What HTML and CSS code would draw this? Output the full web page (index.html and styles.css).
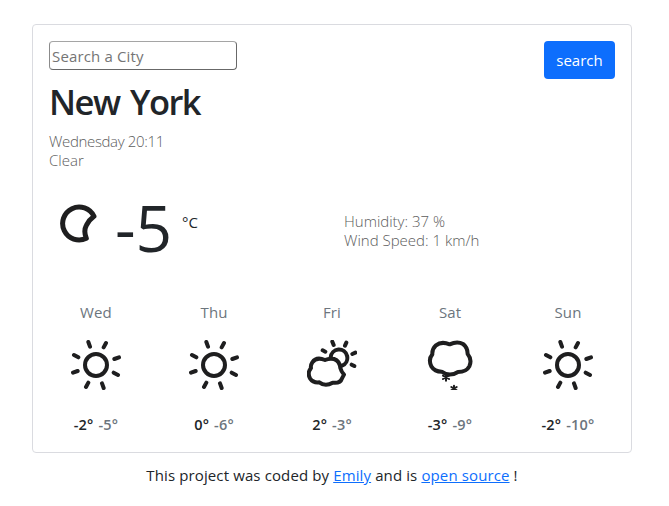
FILE: index.html
```html
<!DOCTYPE html>
<html lang="en">
<head>
<meta charset="utf-8">
<title>Weather</title>
<link rel="stylesheet" href="styles.css">
</head>
<body>
<svg width="0" height="0" class="defs">
  <symbol id="sun" viewBox="-75 -75 150 150">
    <circle r="33"/>
    <g id="rays"><path d="M-18-55L-23-69M23-53L30-66"/></g>
    <use href="#rays" transform="rotate(90)"/>
    <use href="#rays" transform="rotate(180)"/>
    <use href="#rays" transform="rotate(270)"/>
  </symbol>
</svg>
<main class="card">
  <form class="search">
    <input type="text" placeholder="Search a City">
    <button type="button">search</button>
  </form>
  <h1><span>New York</span></h1>
  <ul class="info">
    <li class="day">Wednesday 20:11</li>
    <li class="sky">Clear</li>
  </ul>
  <section class="current">
    <div class="now">
      <svg class="moon" viewBox="57 43 111 117"><path d="M159 80A49.5 49.5 0 1 0 136 146Q127 124 136 107Q144 91 159 80Z"/></svg>
      <span class="temp">-5</span>
      <span class="unit">°C</span>
    </div>
    <ul class="info details">
      <li class="humidity">Humidity: 37 %</li>
      <li class="wind">Wind Speed: 1 km/h</li>
    </ul>
  </section>
  <section class="forecast">
    <div><p class="name">Wed</p><svg><use href="#sun"/></svg><p class="temps"><b>-2°</b> <span>-5°</span></p></div>
    <div><p class="name">Thu</p><svg><use href="#sun"/></svg><p class="temps"><b>0°</b> <span>-6°</span></p></div>
    <div><p class="name">Fri</p>
      <svg viewBox="36 135 150 150">
        <path d="M107 187A25 25 0 1 1 141 212M112 140L116 150M154 143L150 152M83 166L91 170M172 177L181 173M170 209L178 213"/>
        <path d="M90 195Q64 184 52 202Q46 211 48 219Q36 234 45 250Q54 264 73 262Q91 276 113 263Q136 266 141 250L147 239Q139 230 136 219Q134 198 117 192Q103 189 90 195Z"/>
      </svg>
      <p class="temps"><b>2°</b> <span>-3°</span></p></div>
    <div><p class="name">Sat</p>
      <svg viewBox="390 135 150 150">
        <path d="M464 148Q439 138 423 151Q411 162 412 178Q399 193 409 214Q419 230 440 230Q464 247 489 231Q514 231 523 214Q532 194 518 177Q518 157 504 147Q487 137 464 148Z"/>
        <path class="flake" d="M453 237V257M444 242L462 252M444 252L462 242M477 272V290M469 276L485 286M469 286L485 276"/>
      </svg>
      <p class="temps"><b>-3°</b> <span>-9°</span></p></div>
    <div><p class="name">Sun</p><svg><use href="#sun"/></svg><p class="temps"><b>-2°</b> <span>-10°</span></p></div>
  </section>
</main>
<footer>This project was coded by <a href="#">Emily</a> and is <a href="#">open source</a> !</footer>
</body>
</html>
```
FILE: styles.css
```css
* { box-sizing: border-box; }
body {
  margin: 0;
  padding: 24px 37px 0 32px;
  background: #fff;
  color: #212529;
  font: 15px/24px "Open Sans", "Noto Sans", sans-serif;
}
h1, p, ul { margin: 0; padding: 0; }
ul { list-style: none; }
.defs { display: block; }
.card {
  height: 429px;
  padding: 16px;
  border: 1px solid #dadbe0;
  border-radius: 4px;
}
.search {
  display: flex;
  justify-content: space-between;
  align-items: flex-start;
  height: 38px;
}
input {
  width: 188px;
  height: 29px;
  padding: 1px 2px;
  border: 1px solid #686868;
  border-top-color: #a5a5a5;
  border-left-color: #8b8b8b;
  border-radius: 4px;
  font: inherit;
  letter-spacing: 0.15px;
}
input::placeholder { color: #757575; }
button {
  width: 71px;
  height: 38px;
  padding: 0;
  border: 0;
  border-radius: 4px;
  background: #0d6efd;
  color: #fff;
  font: inherit;
}
h1 {
  height: 53px;
  font-size: 34.5px;
  font-weight: 600;
  line-height: 45px;
  letter-spacing: -1.5px;
  word-spacing: 3px;
}
.info {
  color: #5c5c5c;
  font-size: 15px;
  font-weight: 300;
  line-height: 19px;
}
.day { letter-spacing: -0.35px; }
.current {
  display: grid;
  grid-template-columns: 295px 1fr;
  height: 130px;
}
.now { display: flex; align-items: flex-start; padding: 34px 0 0 10px; }
.moon { width: 37px; height: 39px; margin-left: 1px; stroke-width: 15; }
.temp {
  margin: -14px 0 0 18px;
  width: 57px;
  font-size: 64px;
  line-height: 76px;
}
.unit { margin: 6px 0 0 10px; font-size: 15px; }
.details { padding-top: 42px; }
.forecast {
  display: grid;
  grid-template-columns: repeat(5, 118px);
  margin: 0 -12px;
  text-align: center;
}
.name { color: #6c757d; letter-spacing: 0.1px; }
svg { fill: none; stroke: #1e1e1f; stroke-width: 12; stroke-linecap: round; stroke-linejoin: round; }
.forecast svg { display: block; width: 50px; height: 50px; margin: 16px auto 23px; }
.forecast .flake { stroke-width: 6; }
.temps { font-size: 14.5px; letter-spacing: 0.2px; word-spacing: 1px; }
.temps b { font-weight: 600; }
.temps span { color: #6c757d; font-weight: 600; }
footer { margin-top: 10px; text-align: center; letter-spacing: 0.12px; }
a { color: #0d6efd; }
```
